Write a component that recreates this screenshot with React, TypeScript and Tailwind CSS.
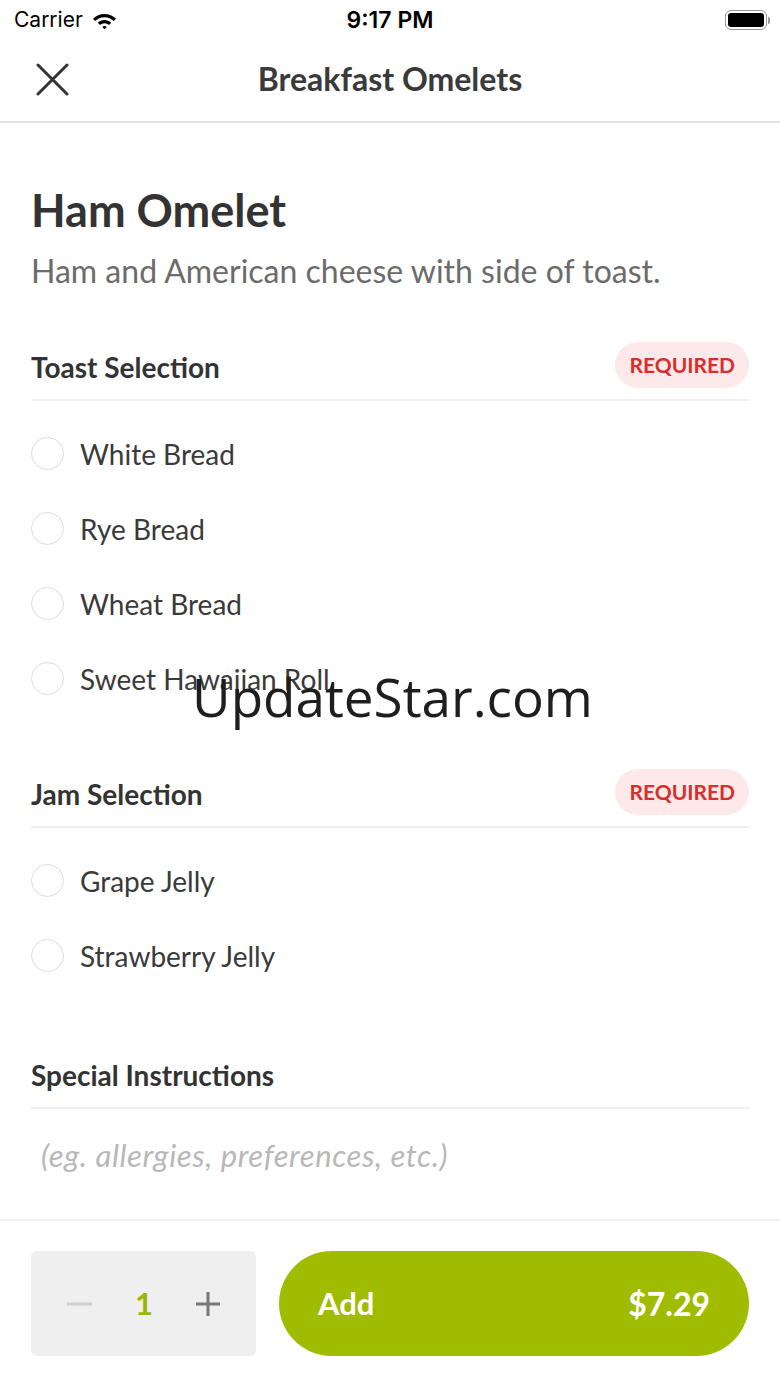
import React from "react";

const toast = ["White Bread", "Rye Bread", "Wheat Bread", "Sweet Hawaiian Roll"];
const jam = ["Grape Jelly", "Strawberry Jelly"];

const StatusBar = () => (
  <div className="relative flex h-10 items-center justify-between pl-[14px] pr-[10px] text-black" style={{ fontFamily: "Inter, 'Liberation Sans', sans-serif" }}>
    <div className="flex items-center gap-[8px]">
      <span className="text-[21px]">Carrier</span>
      <svg width="27" height="20" viewBox="0 0 27 20">
        <path d="M13.5 4C9 4 5 5.8 2 8.7l2.2 2.3C6.6 8.7 9.9 7.3 13.5 7.3s6.9 1.4 9.3 3.7L25 8.7C22 5.8 18 4 13.5 4z" fill="#000" />
        <path d="M13.5 10c-2.6 0-5 1-6.7 2.7l2.3 2.3c1.1-1.1 2.7-1.8 4.4-1.8s3.3.7 4.4 1.8l2.3-2.3C18.5 11 16.1 10 13.5 10z" fill="#000" />
        <path d="M13.5 16c-.8 0-1.6.3-2.2.9l2.2 2.3 2.2-2.3c-.6-.6-1.4-.9-2.2-.9z" fill="#000" />
      </svg>
    </div>
    <span className="absolute left-1/2 -translate-x-1/2 text-[23px] font-semibold">9:17 PM</span>
    <div className="flex items-center">
      <div className="flex h-[20px] w-[42px] items-center rounded-[6px] border-[1.5px] border-[#9a9a9a] p-[2px]">
        <div className="h-full w-full rounded-[3px] bg-black" />
      </div>
      <div className="ml-[1px] h-[7px] w-[2px] rounded-r bg-[#9a9a9a]" />
    </div>
  </div>
);

const Radio = ({ label }: { label: string }) => (
  <div className="flex h-[75px] items-center">
    <div className="h-[33px] w-[33px] rounded-full border-[1.5px] border-[#dcdcdc]" />
    <span className="ml-[16px] text-[28px] text-[#3a3a3a]">{label}</span>
  </div>
);

const SectionHeader = ({ title, required }: { title: string; required?: boolean }) => (
  <div className="box-content flex h-[46px] items-center justify-between border-b-[2px] border-[#f0f0f0] pb-[11px]">
    <span className="pt-[4px] text-[28px] font-bold text-[#333]">{title}</span>
    {required && (
      <span className="flex h-[46px] items-center rounded-full bg-[#fde9e9] px-[14px] text-[21px] font-bold text-[#d7302c]">
        REQUIRED
      </span>
    )}
  </div>
);

export default function App() {
  return (
    <div className="relative flex h-screen flex-col bg-white" style={{ fontFamily: "Lato, 'Open Sans', sans-serif" }}>
      <StatusBar />
      <div className="relative flex h-[83px] items-center justify-center border-b-[2px] border-[#e3e3e3] pb-[4px]">
        <svg className="absolute left-[36px] top-[23px]" width="33" height="33" viewBox="0 0 33 33" fill="none" stroke="#333" strokeWidth="3" strokeLinecap="round">
          <path d="M2 2l29 29M31 2L2 31" />
        </svg>
        <span className="text-[32px] font-bold text-[#3a3a3a]">Breakfast Omelets</span>
      </div>

      <div className="flex-1 px-[31px]">
        <h1 className="mt-[62px] text-[45px] font-bold leading-[50px] text-[#333]">Ham Omelet</h1>
        <p className="mt-[17px] text-[32px] leading-[38px] text-[#6b6b6b]">Ham and American cheese with side of toast.</p>

        <div className="mt-[52px]">
          <SectionHeader title="Toast Selection" required />
          <div className="mt-[15px]">
            {toast.map((t) => (
              <Radio key={t} label={t} />
            ))}
          </div>
        </div>

        <div className="mt-[53px]">
          <SectionHeader title="Jam Selection" required />
          <div className="mt-[15px]">
            {jam.map((t) => (
              <Radio key={t} label={t} />
            ))}
          </div>
        </div>

        <div className="mt-[57px]">
          <SectionHeader title="Special Instructions" />
          <p className="mt-[27px] pl-[10px] text-[31px] italic leading-[38px] tracking-[0.6px] text-[#b8b8b8]">(eg. allergies, preferences, etc.)</p>
        </div>
      </div>

      <div className="flex gap-[23px] border-t-[2px] border-[#f2f2f2] px-[31px] pb-[31px] pt-[30px]">
        <div className="flex h-[105px] w-[225px] items-center justify-between rounded-[6px] bg-[#efefef] px-[36px]">
          <svg width="25" height="4" viewBox="0 0 25 4">
            <rect width="25" height="3" y="0.5" fill="#cfcfcf" />
          </svg>
          <span className="text-[31px] font-bold text-[#99b900]">1</span>
          <svg width="24" height="24" viewBox="0 0 24 24" stroke="#777" strokeWidth="3">
            <path d="M12 0v24M0 12h24" />
          </svg>
        </div>
        <div className="flex h-[105px] flex-1 items-center justify-between rounded-full bg-[#9fbc00] px-[39px] text-[31px] font-bold text-white">
          <span>Add</span>
          <span className="text-[32px]">$7.29</span>
        </div>
      </div>

      <div className="pointer-events-none absolute left-[192px] top-[670px] text-[53px] leading-none text-[#1e1e1e]" style={{ fontFamily: "'Open Sans', sans-serif" }}>
        UpdateStar.com
      </div>
    </div>
  );
}
